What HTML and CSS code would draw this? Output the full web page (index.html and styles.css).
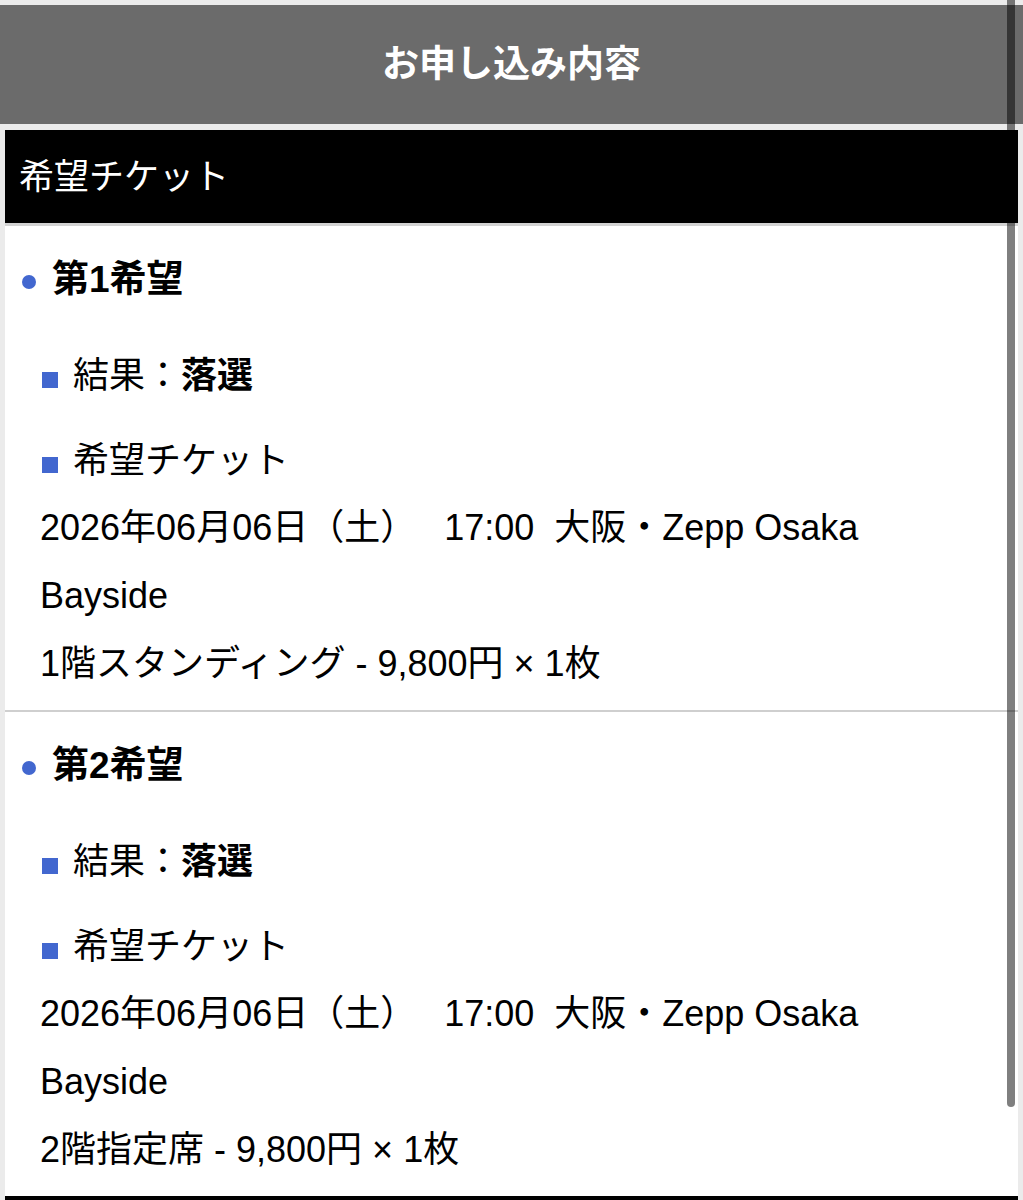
FILE: index.html
```html
<!DOCTYPE html>
<html lang="ja">
<head>
    <meta charset="UTF-8">
    <title>お申し込み内容</title>
    <meta name="viewport" content="width=device-width, initial-scale=1.0">
    <link rel="stylesheet" href="styles.css">
</head>
<body>
    <div class="page-header">お申し込み内容</div>

    <div class="section">
        <div class="section-title">希望チケット</div>

        <div class="choice">
            <h3 class="choice-title">第1希望</h3>
            <div class="row">結果：<strong>落選</strong></div>
            <div class="row row-ticket">希望チケット</div>
            <div class="ticket-detail">
                <p>2026年06月06日（土）　 17:00&nbsp; 大阪・Zepp Osaka Bayside</p>
                <p>1階スタンディング - 9,800円 × 1枚</p>
            </div>
        </div>

        <div class="choice">
            <h3 class="choice-title">第2希望</h3>
            <div class="row">結果：<strong>落選</strong></div>
            <div class="row row-ticket">希望チケット</div>
            <div class="ticket-detail">
                <p>2026年06月06日（土）　 17:00&nbsp; 大阪・Zepp Osaka Bayside</p>
                <p>2階指定席 - 9,800円 × 1枚</p>
            </div>
        </div>
    </div>

    <!-- 次のセクションの見出し帯 -->
    <div class="section">
        <div class="section-title"></div>
    </div>

    <!-- スクロールインジケーター -->
    <div class="scroll-indicator"></div>
</body>
</html>
```

FILE: styles.css
```css
body {
    margin: 0;
    padding-top: 5px;
    background: #ebebeb;
    font-family: "Liberation Sans", "Noto Sans CJK JP", sans-serif;
    color: #000;
    overflow: hidden;
}
.page-header {
    height: 119px;
    line-height: 119px;
    background: #6b6b6b;
    color: #fff;
    font-size: 37px;
    font-weight: bold;
    text-align: center;
    margin-bottom: 6px;
}
.section {
    margin: 0 5px;
    background: #fff;
}
.section-title {
    height: 93px;
    line-height: 93px;
    padding-left: 14px;
    background: #000;
    color: #fff;
    font-size: 35px;
    border-bottom: 3px solid #d2d2d2;
}
.choice {
    padding: 20px 40px 12px 17px;
    font-size: 36px;
}
.choice + .choice {
    border-top: 2px solid #cfcfcf;
}
.choice-title {
    display: flex;
    align-items: center;
    margin: 0 0 29px;
    font-size: 37px;
    line-height: 67px;
    font-weight: bold;
}
.choice-title::before {
    content: "";
    flex: none;
    width: 14px;
    height: 14px;
    margin: 4px 16px 0 0;
    border-radius: 50%;
    background: #4267cf;
}
.row {
    display: flex;
    align-items: center;
    padding-left: 20px;
    line-height: 67px;
}
.row::before {
    content: "";
    flex: none;
    width: 16px;
    height: 16px;
    margin: 8px 15px 0 0;
    background: #4267cf;
}
.row strong {
    font-weight: bold;
}
.row-ticket {
    margin-top: 18px;
}
.ticket-detail {
    padding-left: 18px;
    line-height: 68px;
}
.ticket-detail p {
    margin: 0;
}
.scroll-indicator {
    position: fixed;
    top: 0;
    right: 8px;
    width: 8px;
    height: 1107px;
    border-radius: 0 0 4px 4px;
    background: rgba(0,0,0,0.5);
}
```
